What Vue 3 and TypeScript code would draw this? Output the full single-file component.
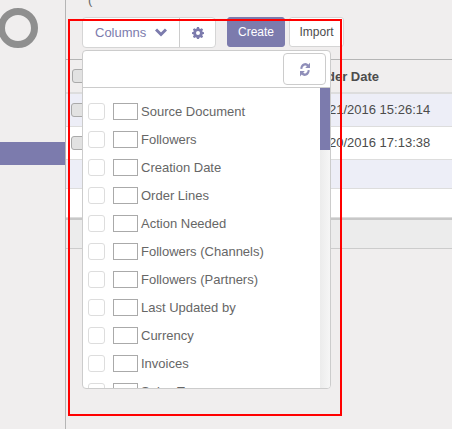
<script setup lang="ts">
const fields: string[] = [
  'Source Document',
  'Followers',
  'Creation Date',
  'Order Lines',
  'Action Needed',
  'Followers (Channels)',
  'Followers (Partners)',
  'Last Updated by',
  'Currency',
  'Invoices',
  'Sales Team',
]
const rows = [
  { date: '21/2016 15:26:14', cls: 'tint' },
  { date: '20/2016 17:13:38', cls: '' },
]
</script>

<template>
  <div class="page">
    <aside class="side">
      <div class="ring"></div>
      <div class="active"></div>
    </aside>
    <main class="main">
      <div class="crumb">(</div>
      <div class="bar">
        <div class="cols">
          <span class="cols-btn">Columns
            <svg class="chev" width="12" height="9" viewBox="0 0 12 9"><path d="M1 1.500 L6 6.500 L11 1.500" fill="none" stroke="#7c7bad" stroke-width="3"/></svg>
          </span>
          <span class="gear-btn">
            <svg width="12" height="12" viewBox="0 0 24 24"><path fill="#7c7bad" fill-rule="evenodd" d="M10 0h4l.7 3.200 2 .8L19.500 2.300 22.200 5l-1.700 2.800.8 2L24 10.500v3.500l-2.700.7-.8 2 1.700 2.800-2.700 2.700-2.800-1.700-2 .8L14 24h-4l-.7-2.700-2-.8-2.800 1.700L1.800 19.500l1.700-2.800-.8-2L0 14v-3.500l2.700-.7.8-2L1.800 5l2.700-2.700 2.800 1.700 2-.8zM12 8a4 4 0 1 0 0 8 4 4 0 0 0 0-8z"/></svg>
          </span>
        </div>
        <button class="create">Create</button>
        <button class="import">Import</button>
      </div>
      <div class="table">
        <div class="thead"><span class="box head-box"></span><b class="date">der Date</b></div>
        <div v-for="r in rows" :key="r.date" class="row" :class="r.cls"><span class="box"></span><span class="date cell">{{ r.date }}</span></div>
        <div class="row short tint"></div>
        <div class="row short"></div>
      </div>
      <div class="tfoot"></div>
    </main>

    <div class="drop">
      <div class="drop-head">
        <span class="refresh">
          <svg class="refresh-icon" width="12" height="15" viewBox="0 0 24 24" preserveAspectRatio="none" fill="none" stroke="#7c7bad" stroke-width="4"><path d="M4.500 11a8 8 0 0 1 13.500-5"/><path d="M19.500 13a8 8 0 0 1-13.500 5"/><path d="M22 1v8.500h-9.500z" fill="#7c7bad" stroke="none"/><path d="M2 23v-8.500h9.500z" fill="#7c7bad" stroke="none"/></svg>
        </span>
      </div>
      <div class="list-wrap">
        <ul class="list">
          <li v-for="f in fields" :key="f"><span class="check"></span><span class="swatch"></span><span>{{ f }}</span></li>
        </ul>
        <div class="track"><div class="thumb"></div></div>
      </div>
    </div>
    <div class="mark"></div>
  </div>
</template>

<style>
html, body { margin: 0; background: #f0eeee; }
</style>

<style scoped>
.page { position: relative; width: 452px; height: 429px; overflow: hidden; display: flex; background: #f0eeee; font-family: "Liberation Sans", Arial, sans-serif; font-size: 13px; color: #4c4c4c; }
.side { width: 65px; border-right: 1px solid #b5b5b5; flex: none; padding-top: 8px; box-sizing: content-box; }
.ring { width: 26px; height: 26px; border: 7px solid #8f8f8f; border-radius: 50%; margin-left: -2px; }
.active { height: 23px; background: #7c7bad; margin-top: 94px; }
.main { flex: 1; min-width: 0; }
.crumb { height: 17px; padding-left: 22px; font-size: 13px; line-height: 0; color: #666; }
.bar { height: 42px; padding-left: 16px; display: flex; align-items: flex-start; }
.cols { width: 134px; height: 31px; box-sizing: border-box; background: #fff; border: 1px solid #d5d5d5; border-radius: 4px; display: flex; }
.cols-btn { width: 97px; padding-left: 12px; box-sizing: border-box; border-right: 1px solid #ccc; color: #7c7bad; line-height: 29px; display: flex; gap: 9px; align-items: center; }
.gear-btn { width: 35px; display: flex; align-items: center; justify-content: center; }
button { font: inherit; font-size: 12px; height: 30px; padding: 0; border-radius: 3px; }
.create { width: 58px; margin-left: 11px; background: #7c7bad; color: #fff; border: 1px solid #7c7bad; }
.import { width: 55px; margin-left: 4px; background: #fff; color: #4c4c4c; border: 1px solid #d5d5d5; }
.table { border-top: 1px solid #b5b5b5; background: #fff; }
.thead { height: 32px; display: flex; align-items: center; background: #f0eeee; border-bottom: 2px solid #ddd; }
.row { height: 32px; display: flex; align-items: center; border-bottom: 1px solid #ddd; }
.row.short { height: 28px; }
.tint { background: #edeef7; }
.box { width: 12px; height: 12px; margin: -1px 0 0 5px; background: #e2e2e2; border: 1px solid #aaa; border-radius: 3px; }
.head-box { margin-left: 6px; }
.date { position: absolute; left: 327px; font-size: 13px; }
.date.cell { left: 329px; margin-top: -2px; }
.tfoot { height: 28px; background: #ececec; border-top: 2px solid #c8c8c8; border-bottom: 1px solid #ccc; }
.drop { position: absolute; left: 82px; top: 50px; width: 249px; height: 339px; box-sizing: border-box; background: #fff; border: 1px solid #ccc; border-radius: 4px; overflow: hidden; display: flex; flex-direction: column; }
.drop-head { height: 37px; flex: none; border-bottom: 1px solid #ccc; display: flex; justify-content: flex-end; box-sizing: border-box; padding: 2px 4px 0 0; }
.refresh { width: 43px; height: 32px; box-sizing: border-box; border: 1px solid #ccc; border-radius: 4px; display: flex; align-items: center; justify-content: center; }
.refresh-icon { opacity: .85; }
.list-wrap { flex: 1; min-height: 0; display: flex; }
.list { flex: 1; margin: 0; padding: 9px 0 0 5px; list-style: none; overflow: hidden; color: #666; }
.list li { height: 28px; display: flex; align-items: center; white-space: nowrap; }
.check { width: 15px; height: 15px; border: 1px solid #ddd; border-radius: 3px; flex: none; }
.swatch { width: 23px; height: 15px; border: 1px solid #aaa; margin-left: 8px; margin-right: 3px; flex: none; }
.track { width: 10px; background: linear-gradient(90deg, #ececec, #f6f6f6); flex: none; }
.thumb { height: 62px; background: #7c7bad; }
.mark { position: absolute; left: 68px; top: 19px; width: 270px; height: 393px; border: 2px solid #f00; pointer-events: none; }
</style>
